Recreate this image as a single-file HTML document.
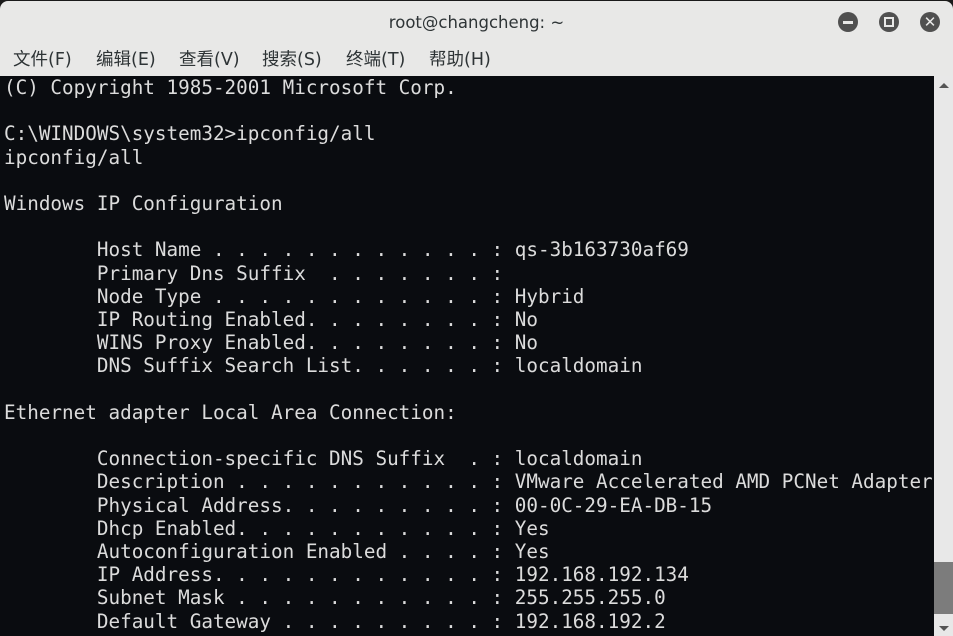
<!DOCTYPE html>
<html><head><meta charset="utf-8"><style>
*{margin:0;padding:0;box-sizing:border-box}
body{width:953px;height:636px;overflow:hidden;background:#1a1a1a;font-family:"DejaVu Sans","Liberation Sans","Noto Sans CJK SC",sans-serif}
.win{position:absolute;left:0;top:1px;width:953px;height:635px;background:#e8e8e7;border-radius:8px 8px 0 0;overflow:hidden}
.title{position:absolute;top:0;left:0;right:0;height:43px;text-align:center;line-height:43px;font-size:16.5px;color:#2e3436}
.btn{position:absolute;top:11px;width:20px;height:20px;border-radius:50%;background:#505050}
.menu{position:absolute;top:43px;left:0;height:32px;font-size:17.5px;color:#2e3436;line-height:32px}
.menu span{position:absolute;white-space:nowrap}
.term{position:absolute;left:0;top:75px;width:934px;height:560px;background:#0a0c10;color:#dcdcdc;font-family:"DejaVu Sans Mono","Liberation Mono",monospace;font-size:19.3px;line-height:23.2px;white-space:pre;padding-left:4px;overflow:hidden}
.sb{position:absolute;left:934px;top:75px;width:19px;height:560px;background:#e8e8e8}
.thumb{position:absolute;left:0;top:486px;width:19px;height:52px;background:#7c7c7c}
</style></head><body>
<div class="win">
<div class="title">root@changcheng: ~</div>
<div class="btn" style="left:838px"><div style="position:absolute;left:5px;top:9px;width:10px;height:3px;background:#e8e8e7"></div></div>
<div class="btn" style="left:879px"><div style="position:absolute;left:5px;top:5px;width:10px;height:10px;border:2px solid #e8e8e7"></div></div>
<div class="btn" style="left:920px"><div style="position:absolute;left:0;top:0;width:20px;height:20px;color:#e8e8e7;font-size:15px;line-height:20px;text-align:center;font-weight:bold">✕</div></div>
<div class="menu">
<span style="left:13px">文件(F)</span><span style="left:96px">编辑(E)</span><span style="left:179px">查看(V)</span><span style="left:262px">搜索(S)</span><span style="left:346px">终端(T)</span><span style="left:429px">帮助(H)</span>
</div>
<div class="term">(C) Copyright 1985-2001 Microsoft Corp.

C:\WINDOWS\system32>ipconfig/all
ipconfig/all

Windows IP Configuration

        Host Name . . . . . . . . . . . . : qs-3b163730af69
        Primary Dns Suffix  . . . . . . . :
        Node Type . . . . . . . . . . . . : Hybrid
        IP Routing Enabled. . . . . . . . : No
        WINS Proxy Enabled. . . . . . . . : No
        DNS Suffix Search List. . . . . . : localdomain

Ethernet adapter Local Area Connection:

        Connection-specific DNS Suffix  . : localdomain
        Description . . . . . . . . . . . : VMware Accelerated AMD PCNet Adapter
        Physical Address. . . . . . . . . : 00-0C-29-EA-DB-15
        Dhcp Enabled. . . . . . . . . . . : Yes
        Autoconfiguration Enabled . . . . : Yes
        IP Address. . . . . . . . . . . . : 192.168.192.134
        Subnet Mask . . . . . . . . . . . : 255.255.255.0
        Default Gateway . . . . . . . . . : 192.168.192.2</div>
<div class="sb"><div style="position:absolute;left:5px;top:7px;width:0;height:0;border-left:5px solid transparent;border-right:5px solid transparent;border-bottom:5px solid #555"></div><div class="thumb"></div><div style="position:absolute;left:5px;top:550px;width:0;height:0;border-left:5px solid transparent;border-right:5px solid transparent;border-top:5px solid #555"></div></div>
</div>
</body></html>
